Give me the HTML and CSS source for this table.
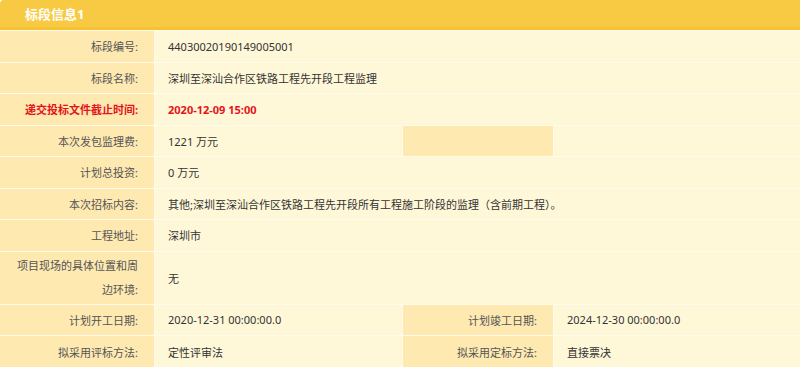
FILE: index.html
```html
<!DOCTYPE html>
<html lang="zh-CN">
<head>
<meta charset="utf-8">
<title>标段信息</title>
<link rel="stylesheet" href="styles.css">
</head>
<body>
<section class="panel">
  <h2 class="panel-title">标段信息1</h2>
  <div class="info">
    <div class="label">标段编号:</div>
    <div class="value wide">44030020190149005001</div>

    <div class="label">标段名称:</div>
    <div class="value wide">深圳至深汕合作区铁路工程先开段工程监理</div>

    <div class="label alert">递交投标文件截止时间:</div>
    <div class="value wide alert">2020-12-09 15:00</div>

    <div class="label">本次发包监理费:</div>
    <div class="value">1221 万元</div>
    <div class="label"></div>
    <div class="value"></div>

    <div class="label">计划总投资:</div>
    <div class="value wide">0 万元</div>

    <div class="label">本次招标内容:</div>
    <div class="value wide">其他;深圳至深汕合作区铁路工程先开段所有工程施工阶段的监理（含前期工程）。</div>

    <div class="label">工程地址:</div>
    <div class="value wide">深圳市</div>

    <div class="label multi">项目现场的具体位置和周边环境:</div>
    <div class="value wide">无</div>

    <div class="label">计划开工日期:</div>
    <div class="value">2020-12-31 00:00:00.0</div>
    <div class="label">计划竣工日期:</div>
    <div class="value">2024-12-30 00:00:00.0</div>

    <div class="label">拟采用评标方法:</div>
    <div class="value">定性评审法</div>
    <div class="label">拟采用定标方法:</div>
    <div class="value">直接票决</div>
  </div>
</section>
</body>
</html>
```

FILE: styles.css
```css
html, body {
  margin: 0;
  padding: 0;
  background: #ffffff;
}

body {
  font-family: "Noto Sans", "Noto Sans CJK SC", sans-serif;
  font-size: 11px;
  color: #444444;
}

.panel {
  width: 800px;
}

.panel-title {
  margin: 0;
  height: 30px;
  line-height: 29px;
  padding-left: 25px;
  box-sizing: border-box;
  background: #f8ca43;
  border-bottom: 3px solid #f6c233;
  border-top-left-radius: 4px;
  color: #ffffff;
  font-size: 13px;
  font-weight: bold;
}

/* two label/value pairs per row; single pairs span the right side */
.info {
  display: grid;
  grid-template-columns: 154px 247px 150px 1fr;
  grid-template-rows: repeat(7, 30.5px) 52px 30.5px 31px;
  gap: 1px;
  padding-top: 1px;
  background: #fffaea;
}

.label,
.value {
  display: flex;
  align-items: center;
}

.label {
  justify-content: flex-end;
  text-align: right;
  padding: 0 16px 0 14px;
  background: #fee9b1;
  color: #555555;
}

.value {
  padding: 0 12px 0 13px;
  background: #fff8d8;
  color: #333333;
}

.wide {
  grid-column: 2 / 5;
}

.multi {
  line-height: 24px;
}

.alert {
  color: #e4131b;
  font-weight: bold;
}
```
